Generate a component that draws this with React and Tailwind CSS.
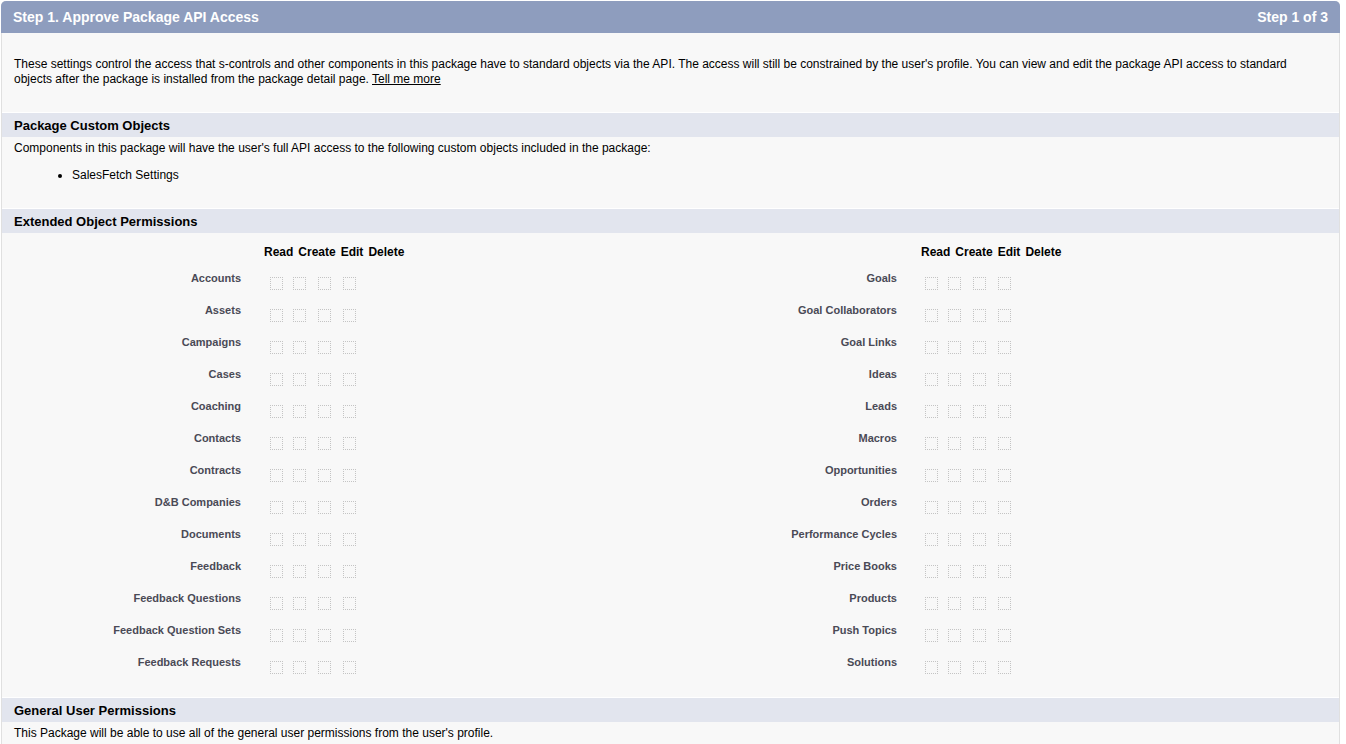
import React from "react";

const left = [
  "Accounts",
  "Assets",
  "Campaigns",
  "Cases",
  "Coaching",
  "Contacts",
  "Contracts",
  "D&B Companies",
  "Documents",
  "Feedback",
  "Feedback Questions",
  "Feedback Question Sets",
  "Feedback Requests",
];
const right = [
  "Goals",
  "Goal Collaborators",
  "Goal Links",
  "Ideas",
  "Leads",
  "Macros",
  "Opportunities",
  "Orders",
  "Performance Cycles",
  "Price Books",
  "Products",
  "Push Topics",
  "Solutions",
];

function Box() {
  return <div className="w-[13px] h-[13px] border border-dotted border-[#c4c4c4]" />;
}

function PermTable({ items, width, boxOffset, headOffset }) {
  return (
    <div className={width}>
      <div className="flex h-[25px] pt-[2px]">
        <div className="w-[227px]" />
        <div className={`${headOffset} flex gap-[5px] text-[12px] leading-[15px] font-bold text-black`}>
          <span>Read</span>
          <span>Create</span>
          <span>Edit</span>
          <span>Delete</span>
        </div>
      </div>
      {items.map((name) => (
        <div key={name} className="flex h-[32px] items-start">
          <div className="w-[227px] text-right pt-[4px] text-[11px] leading-[13px] font-bold text-[#4a4a56]">
            {name}
          </div>
          <div className={`${boxOffset} mt-[9px] flex`}>
            <div className="w-[23px]"><Box /></div>
            <div className="w-[25px]"><Box /></div>
            <div className="w-[25px]"><Box /></div>
            <div className="w-[25px]"><Box /></div>
          </div>
        </div>
      ))}
    </div>
  );
}

function Bar({ children }) {
  return (
    <div className="border-t border-white bg-[#e2e5ee] h-[25px] pl-[12px] text-[13px] leading-[26px] font-bold text-black">
      {children}
    </div>
  );
}

export default function App() {
  return (
    <div
      className="bg-white w-[1346px] h-[744px] overflow-hidden pt-px pl-px"
      style={{ fontFamily: '"Liberation Sans", Arial, sans-serif' }}
    >
      <div className="w-[1339px] h-[760px] bg-[#f8f8f8] border border-t-0 border-[#e0e0e0] rounded-t-[5px]">
        <div className="h-[32px] pt-px bg-[#8e9dbe] rounded-t-[5px] flex items-center justify-between pl-[12px] pr-[12px] text-white font-bold text-[14px] -mx-px">
          <span>Step 1. Approve Package API Access</span>
          <span>Step 1 of 3</span>
        </div>
        <div className="pt-[24px] pb-[25px] pl-[12px] pr-[12px] text-[12px] leading-[15px] text-black">
          These settings control the access that s-controls and other components in this package have to standard objects via the API. The access will still be constrained by the user's profile. You can view and edit the package API access to standard objects after the package is installed from the package detail page.{" "}
          <a className="underline">Tell me more</a>
        </div>
        <Bar>Package Custom Objects</Bar>
        <div className="pl-[12px] pt-[4px] pb-[25px] text-[12px] leading-[15px] text-black">
          <div>Components in this package will have the user's full API access to the following custom objects included in the package:</div>
          <ul className="mt-[12px] list-disc pl-[58px]">
            <li>SalesFetch Settings</li>
          </ul>
        </div>
        <Bar>Extended Object Permissions</Bar>
        <div className="flex pl-[12px] pt-[10px] pb-[13px]">
          <PermTable items={left} width="w-[656px]" boxOffset="ml-[29px]" headOffset="ml-[23px]" />
          <PermTable items={right} width="w-[656px]" boxOffset="ml-[28px]" headOffset="ml-[24px]" />
        </div>
        <Bar>General User Permissions</Bar>
        <div className="pl-[12px] pt-[4px] text-[12px] leading-[15px] text-black">
          This Package will be able to use all of the general user permissions from the user's profile.
        </div>
      </div>
    </div>
  );
}
